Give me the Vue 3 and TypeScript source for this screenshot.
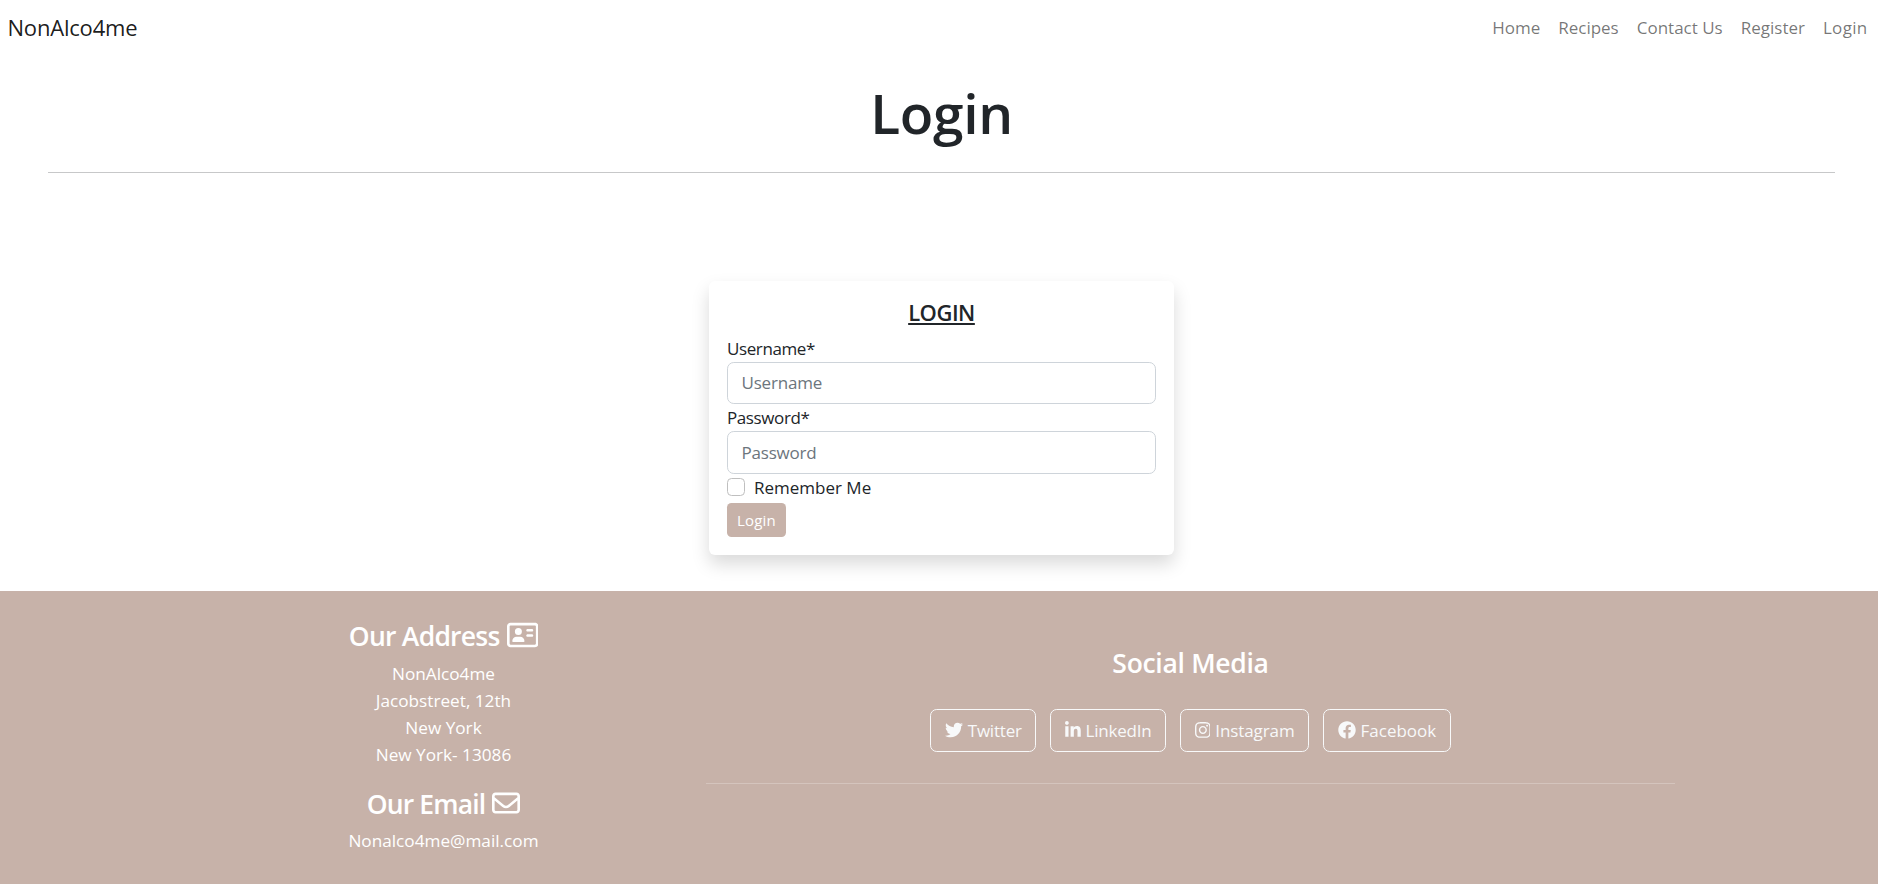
<script setup lang="ts">
import { ref } from 'vue'

interface SocialLink {
  name: string
  box: string
  path: string
}

const navLinks: string[] = ['Home', 'Recipes', 'Contact Us', 'Register', 'Login']
const address: string[] = ['NonAlco4me', 'Jacobstreet, 12th', 'New York', 'New York- 13086']

const username = ref('')
const password = ref('')
const remember = ref(false)

const socials: SocialLink[] = [
  {
    name: 'Twitter',
    box: '0 0 512 512',
    path: 'M459.37 151.716c.325 4.548.325 9.097.325 13.645 0 138.72-105.583 298.558-298.558 298.558-59.452 0-114.68-17.219-161.137-47.106 8.447.974 16.568 1.299 25.34 1.299 49.055 0 94.213-16.568 130.274-44.832-46.132-.975-84.792-31.188-98.112-72.772 6.498.974 12.995 1.624 19.818 1.624 9.421 0 18.843-1.3 27.614-3.573-48.081-9.747-84.143-51.98-84.143-102.985v-1.299c13.969 7.797 30.214 12.67 47.431 13.319-28.264-18.843-46.781-51.005-46.781-87.391 0-19.492 5.197-37.36 14.294-52.954 51.655 63.675 129.3 105.258 216.365 109.807-1.624-7.797-2.599-15.918-2.599-24.04 0-57.828 46.782-104.934 104.934-104.934 30.213 0 57.502 12.67 76.67 33.137 23.715-4.548 46.456-13.32 66.599-25.34-7.798 24.366-24.366 44.833-46.132 57.827 21.117-2.273 41.584-8.122 60.426-16.243-14.292 20.791-32.161 39.308-52.628 54.253z',
  },
  {
    name: 'LinkedIn',
    box: '0 0 448 512',
    path: 'M100.28 448H7.4V148.9h92.88zM53.79 108.1C24.09 108.1 0 83.5 0 53.8a53.79 53.79 0 0 1 107.58 0c0 29.7-24.1 54.3-53.79 54.3zM447.9 448h-92.68V302.4c0-34.7-.7-79.2-48.29-79.2-48.29 0-55.69 37.7-55.69 76.7V448h-92.78V148.9h89.08v40.8h1.3c12.4-23.5 42.69-48.3 87.88-48.3 94 0 111.28 61.9 111.28 142.3V448z',
  },
  {
    name: 'Instagram',
    box: '0 0 448 512',
    path: 'M224.1 141c-63.6 0-114.9 51.3-114.9 114.9s51.3 114.9 114.9 114.9S339 319.5 339 255.900 287.700 141 224.100 141zm0 189.600c-41.100 0-74.700-33.500-74.700-74.700s33.500-74.700 74.700-74.700 74.700 33.500 74.700 74.700-33.600 74.700-74.700 74.700zm146.400-194.300c0 14.900-12 26.800-26.800 26.800-14.900 0-26.800-12-26.800-26.800s12-26.800 26.800-26.800 26.800 12 26.800 26.800zm76.100 27.200c-1.700-35.900-9.900-67.700-36.200-93.900-26.200-26.200-58-34.400-93.900-36.200-37-2.100-147.900-2.100-184.900 0-35.800 1.700-67.600 9.900-93.900 36.100s-34.400 58-36.200 93.900c-2.100 37-2.100 147.900 0 184.900 1.700 35.900 9.900 67.700 36.200 93.900s58 34.400 93.900 36.200c37 2.100 147.900 2.100 184.900 0 35.900-1.700 67.700-9.900 93.900-36.200 26.200-26.200 34.400-58 36.200-93.900 2.100-37 2.100-147.800 0-184.800zM398.800 388c-7.800 19.600-22.900 34.700-42.600 42.600-29.500 11.700-99.500 9-132.100 9s-102.700 2.600-132.100-9c-19.600-7.800-34.700-22.900-42.600-42.600-11.700-29.500-9-99.500-9-132.100s-2.600-102.700 9-132.100c7.800-19.600 22.900-34.700 42.600-42.600 29.500-11.700 99.500-9 132.100-9s102.700-2.600 132.100 9c19.600 7.800 34.700 22.900 42.600 42.600 11.700 29.500 9 99.500 9 132.100s2.700 102.700-9 132.100z',
  },
  {
    name: 'Facebook',
    box: '0 0 512 512',
    path: 'M504 256C504 119 393 8 256 8S8 119 8 256c0 123.78 90.69 226.38 209.25 245V327.69h-63V256h63v-54.64c0-62.15 37-96.48 93.67-96.48 27.14 0 55.52 4.84 55.52 4.84v61h-31.28c-30.8 0-40.41 19.12-40.41 38.73V256h68.78l-11 71.69h-57.78V501C413.31 482.38 504 379.78 504 256z',
  },
]
</script>

<template>
  <div class="page">
    <header class="navbar">
      <a class="brand">NonAlco4me</a>
      <nav class="links">
        <a v-for="link in navLinks" :key="link" :class="['link', link.toLowerCase().replace(' ', '-')]">{{ link }}</a>
      </nav>
    </header>

    <main class="main">
      <h1 class="title">Login</h1>
      <hr class="rule" />
      <form class="card" @submit.prevent>
        <h5 class="card-title">LOGIN</h5>
        <label class="label" for="username">Username*</label>
        <input id="username" v-model="username" class="input" type="text" placeholder="Username" />
        <label class="label" for="password">Password*</label>
        <input id="password" v-model="password" class="input tall" type="password" placeholder="Password" />
        <label class="check">
          <input v-model="remember" class="checkbox" type="checkbox" />
          <span>Remember Me</span>
        </label>
        <button class="submit" type="submit">Login</button>
      </form>
    </main>

    <footer class="footer">
      <section class="contact">
        <h3 class="heading">
          <span class="address-title">Our Address</span>
          <svg class="heading-icon" viewBox="0 0 576 512">
            <path d="M512 80c8.8 0 16 7.2 16 16V416c0 8.8-7.2 16-16 16H64c-8.8 0-16-7.2-16-16V96c0-8.8 7.2-16 16-16H512zM64 32C28.7 32 0 60.7 0 96V416c0 35.3 28.7 64 64 64H512c35.3 0 64-28.7 64-64V96c0-35.3-28.7-64-64-64H64zM208 256a64 64 0 1 0 0-128 64 64 0 1 0 0 128zm-32 32c-44.2 0-80 35.8-80 80c0 8.8 7.2 16 16 16H304c8.8 0 16-7.2 16-16c0-44.2-35.8-80-80-80H176zM376 144c-13.3 0-24 10.7-24 24s10.7 24 24 24h80c13.3 0 24-10.7 24-24s-10.7-24-24-24H376zm0 96c-13.3 0-24 10.7-24 24s10.700 24 24 24h80c13.3 0 24-10.7 24-24s-10.7-24-24-24H376z" />
          </svg>
        </h3>
        <p class="lines">
          <span v-for="line in address" :key="line">{{ line }}</span>
        </p>
        <h3 class="heading">
          <span class="email-title">Our Email</span>
          <svg class="heading-icon" viewBox="0 0 512 512">
            <path d="M64 112c-8.800 0-16 7.200-16 16v22.100L220.500 291.700c20.700 17 50.400 17 71.100 0L464 150.100V128c0-8.800-7.200-16-16-16H64zM48 212.200V384c0 8.800 7.200 16 16 16H448c8.800 0 16-7.200 16-16V212.200L322 328.800c-38.400 31.500-93.700 31.500-132 0L48 212.200zM0 128C0 92.700 28.700 64 64 64H448c35.300 0 64 28.700 64 64V384c0 35.300-28.700 64-64 64H64c-35.300 0-64-28.700-64-64V128z" />
          </svg>
        </h3>
        <p class="lines email"><span>Nonalco4me@mail.com</span></p>
      </section>

      <section class="social">
        <h3 class="heading social-title">Social Media</h3>
        <div class="buttons">
          <a v-for="item in socials" :key="item.name" :class="['social-button', item.name.toLowerCase()]">
            <svg class="social-icon" :viewBox="item.box"><path :d="item.path" /></svg>
            <span>{{ item.name }}</span>
          </a>
        </div>
        <hr class="social-rule" />
      </section>
    </footer>
  </div>
</template>

<style>
body {
  margin: 0;
  background: #fff;
}
</style>

<style scoped>
.page {
  display: flex;
  flex-direction: column;
  height: 884px;
  overflow: hidden;
  box-sizing: border-box;
  font-family: "Open Sans", "Noto Sans", sans-serif;
  font-size: 17px;
  line-height: 27px;
  color: #212529;
}

.page *,
.page *::before {
  box-sizing: border-box;
}

.navbar {
  display: flex;
  justify-content: space-between;
  align-items: center;
  height: 55px;
  padding: 0 10.5px 0 7.5px;
}

.brand {
  padding-bottom: 2px;
  font-size: 22px;
  line-height: 34px;
  letter-spacing: -0.2px;
  color: rgba(0, 0, 0, 0.9);
}

.links {
  display: flex;
  gap: 18px;
}

.link {
  color: rgba(0, 0, 0, 0.55);
}

.link.login {
  letter-spacing: 0.3px;
}

.main {
  display: flex;
  flex-direction: column;
  align-items: center;
  height: 536px;
  padding-left: 5px;
}

.title {
  margin: 24px 0 0;
  font-size: 55px;
  font-weight: 600;
  line-height: 67px;
  letter-spacing: -0.3px;
}

.rule {
  width: 1787px;
  height: 1px;
  margin: 26px 0 108px;
  border: 0;
  background: #c7c8c9;
}

.card {
  display: flex;
  flex-direction: column;
  align-items: flex-start;
  width: 465px;
  height: 274px;
  padding: 18px;
  border-radius: 6px;
  background: #fff;
  box-shadow: 0 9px 18px rgba(0, 0, 0, 0.15);
}

.card-title {
  align-self: center;
  margin: 0 0 9px;
  font-size: 22px;
  font-weight: 600;
  line-height: 27px;
  letter-spacing: -0.5px;
  text-decoration: underline;
  text-decoration-thickness: 2px;
  text-underline-offset: 2px;
  text-decoration-skip-ink: none;
}

.label {
  letter-spacing: -0.4px;
}

.input {
  width: 429px;
  height: 42px;
  padding: 0 13.5px 1px;
  border: 1px solid #ced4da;
  border-radius: 6.75px;
  outline: 0;
  background: #fff;
  color: #212529;
  font: inherit;
}

.input.tall {
  height: 43px;
}

.input::placeholder {
  color: #6c757d;
  letter-spacing: -0.2px;
  opacity: 1;
}

.check {
  display: flex;
  gap: 9px;
  margin-bottom: 2px;
}

.checkbox {
  width: 18px;
  height: 18px;
  margin: 4px 0 0;
  border: 1px solid #bfbfbf;
  border-radius: 4.5px;
  appearance: none;
  background: #fff;
}

.submit {
  height: 34px;
  padding: 0 10px;
  border: 0;
  border-radius: 4.5px;
  background: #c7b2a9;
  color: #fff;
  font: inherit;
  font-size: 15px;
  letter-spacing: 0.2px;
}

.footer {
  display: grid;
  grid-template-columns: 481px 969px;
  column-gap: 22px;
  height: 293px;
  padding: 26px 203px 0;
  background: #c7b2a9;
  color: #fff;
}

.contact {
  text-align: center;
  font-size: 17.2px;
}

.heading {
  display: flex;
  justify-content: center;
  gap: 7px;
  height: 33.6px;
  margin: 0 0 9.4px;
  font-size: 26.5px;
  font-weight: 600;
  line-height: 38px;
}

.heading-icon {
  height: 28px;
  margin-top: 4px;
  fill: currentColor;
}

.address-title {
  font-weight: 650;
  letter-spacing: -0.75px;
}

.email-title {
  font-weight: 650;
  letter-spacing: -0.85px;
}

.lines {
  display: flex;
  flex-direction: column;
  margin: 0 0 17px;
}

.lines.email {
  margin-top: -1px;
}

.social {
  display: flex;
  flex-direction: column;
  padding-top: 27px;
}

.social-title {
  letter-spacing: -0.3px;
}

.buttons {
  display: flex;
  justify-content: center;
  gap: 14px;
  margin-top: 22px;
}

.social-button {
  display: flex;
  align-items: center;
  gap: 5px;
  height: 43px;
  padding: 0 13.5px;
  border: 1px solid #f8f9fa;
  border-radius: 6.75px;
  color: #f8f9fa;
  letter-spacing: -0.2px;
}

.social-button.instagram {
  letter-spacing: -0.1px;
}

.social-button.facebook {
  letter-spacing: 0;
}

.social-icon {
  height: 18px;
  fill: currentColor;
}

.social-rule {
  width: 100%;
  height: 1px;
  margin: 31px 0 0;
  border: 0;
  background: #d4c4bd;
}
</style>
